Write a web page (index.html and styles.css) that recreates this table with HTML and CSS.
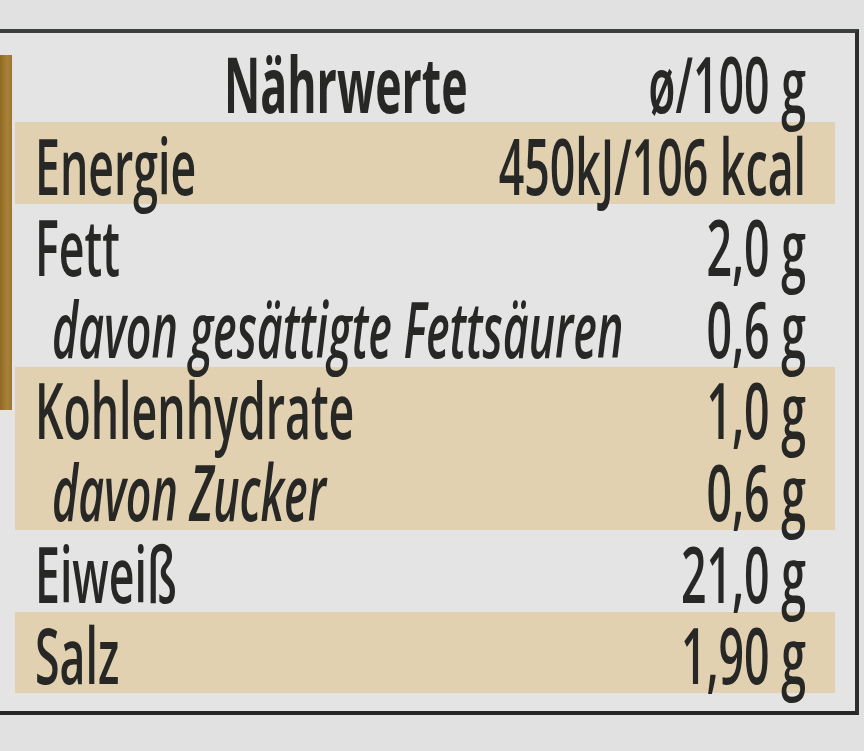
FILE: index.html
```html
<!DOCTYPE html>
<html lang="de">
<head>
<meta charset="utf-8">
<title>Nährwerte</title>
<link rel="stylesheet" href="styles.css">
</head>
<body>
<div class="frame">
  <div class="accent"></div>
  <div class="inner">
    <div class="row head"><span class="name">Nährwerte</span><span class="val">ø/100 g</span></div>
    <div class="row band"><span class="name">Energie</span><span class="val">450kJ/106 kcal</span></div>
    <div class="row"><span class="name">Fett</span><span class="val">2,0 g</span></div>
    <div class="row sub"><span class="name">davon gesättigte Fettsäuren</span><span class="val">0,6 g</span></div>
    <div class="row band"><span class="name">Kohlenhydrate</span><span class="val">1,0 g</span></div>
    <div class="row band sub"><span class="name">davon Zucker</span><span class="val">0,6 g</span></div>
    <div class="row"><span class="name">Eiweiß</span><span class="val">21,0 g</span></div>
    <div class="row band"><span class="name">Salz</span><span class="val">1,90 g</span></div>
  </div>
</div>
</body>
</html>
```
FILE: styles.css
```css
:root { --s: 0.58; }
html, body { margin: 0; padding: 0; }
body {
  background: #e1e1e2;
  width: 864px;
  height: 751px;
  overflow: hidden;
  font-family: "Open Sans", "DejaVu Sans", sans-serif;
  color: #272725;
}
.frame {
  margin-top: 29px;
  width: 859px;
  height: 686px;
  box-sizing: border-box;
  border-top: 4px solid #3a3e3e;
  border-right: 4px solid #2c2e2e;
  border-bottom: 4px solid #262828;
  background: #e4e4e4;
  display: flex;
  align-items: flex-start;
  overflow: hidden;
}
.accent {
  flex: none;
  width: 12px;
  height: 355px;
  margin-top: 22px;
  margin-right: 3px;
  background: linear-gradient(90deg, #8f6a22, #a9823a 60%, #9a7630);
}
.inner {
  flex: none;
  width: calc(820px / var(--s));
  transform: scaleX(var(--s));
  transform-origin: 0 0;
}
.row {
  box-sizing: border-box;
  height: 81.6px;
  display: flex;
  justify-content: space-between;
  align-items: flex-end;
  padding: 0 calc(29px / var(--s)) 0 calc(20px / var(--s));
  font-size: 77px;
  line-height: 1;
  font-weight: 600;
  white-space: nowrap;
}
.row.head {
  height: 89px;
}
.head .name {
  font-weight: 700;
  margin-left: calc(189px / var(--s));
}
.band {
  background: #e1d1b0;
}
.sub .name {
  font-style: italic;
  padding-left: calc(17px / var(--s));
}
```
